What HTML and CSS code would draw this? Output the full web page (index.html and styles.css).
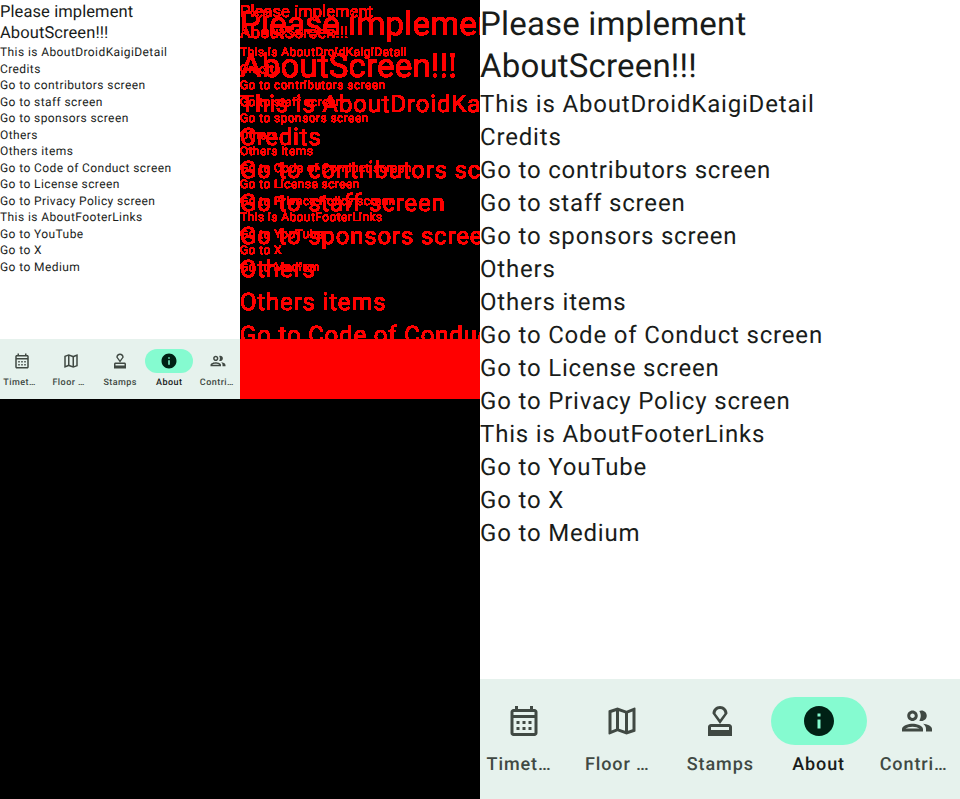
FILE: index.html
```
<!DOCTYPE html>
<html lang="en">
<head>
<meta charset="utf-8">
<title>About screen comparison</title>
<link rel="stylesheet" href="styles.css">
</head>
<body>
<svg class="defs" aria-hidden="true">
  <filter id="changed" x="0" y="0" width="100%" height="100%" color-interpolation-filters="sRGB">
    <feColorMatrix values="60 0 0 0 -1  0 0 0 0 0  0 0 0 0 0  0 0 0 0 1"/>
  </filter>
  <symbol id="calendar" viewBox="0 0 24 24"><path d="M19 4h-1V2h-2v2H8V2H6v2H5C3.89 4 3.01 4.9 3.01 6L3 20c0 1.1.89 2 2 2h14c1.1 0 2-.9 2-2V6c0-1.1-.9-2-2-2zm0 16H5V10h14v10zm0-12H5V6h14v2zM9 14H7v-2h2v2zm4 0h-2v-2h2v2zm4 0h-2v-2h2v2zM9 18H7v-2h2v2zm4 0h-2v-2h2v2zm4 0h-2v-2h2v2z"/></symbol>
  <symbol id="map" viewBox="0 0 24 24"><path d="M20.5 3l-.16.03L15 5.1 9 3 3.36 4.9c-.21.07-.36.25-.36.48V20.5c0 .28.22.5.5.5l.16-.03L9 18.9l6 2.1 5.64-1.9c.21-.07.36-.25.36-.48V3.500c0-.28-.22-.5-.5-.5zM10 5.470l4 1.400v11.660l-4-1.400V5.470zm-5 .990l3-1.010v11.700l-3 1.160V6.460zm14 11.080l-3 1.010V6.860l3-1.160v11.840z"/></symbol>
  <symbol id="stamp" viewBox="0 0 24 24"><path d="M4 16v6h16v-6c0-1.1-.9-2-2-2H6c-1.1 0-2 .9-2 2zm14 2H6v-2h12v2zM12 2C9.24 2 7 4.24 7 7l5 7 5-7c0-2.76-2.24-5-5-5zm0 9L9 7c0-1.66 1.34-3 3-3s3 1.34 3 3l-3 4z"/></symbol>
  <symbol id="info" viewBox="0 0 24 24"><path d="M12 2C6.48 2 2 6.48 2 12s4.48 10 10 10 10-4.480 10-10S17.520 2 12 2zm1 15h-2v-6h2v6zm0-8h-2V7h2v2z"/></symbol>
  <symbol id="people" viewBox="0 0 24 24"><path d="M9 13.75c-2.34 0-7 1.17-7 3.5V19h14v-1.75c0-2.33-4.66-3.5-7-3.5zM4.34 17c.84-.58 2.87-1.25 4.66-1.25s3.82.67 4.66 1.25H4.34zM9 12c1.93 0 3.5-1.57 3.5-3.5S10.93 5 9 5 5.500 6.570 5.500 8.500 7.070 12 9 12zm0-5c.83 0 1.500.67 1.500 1.500S9.830 10 9 10s-1.500-.67-1.500-1.500S8.170 7 9 7zm7.040 6.810c1.160.84 1.960 1.960 1.960 3.440V19h4v-1.750c0-2.020-3.500-3.170-5.960-3.440zM15 12c1.930 0 3.500-1.570 3.500-3.500S16.930 5 15 5c-.54 0-1.040.13-1.500.35.63.89 1 1.980 1 3.150s-.37 2.260-1 3.150c.46.22.96.35 1.500.35z"/></symbol>
</svg>
<main class="comparison">
  <section class="screen screen-small">
    <div class="content">
      <h1>Please implement<br>AboutScreen!!!</h1>
      <p>This is AboutDroidKaigiDetail</p><p>Credits</p><p>Go to contributors screen</p><p>Go to staff screen</p><p>Go to sponsors screen</p><p>Others</p><p>Others items</p><p>Go to Code of Conduct screen</p><p>Go to License screen</p><p>Go to Privacy Policy screen</p><p>This is AboutFooterLinks</p><p>Go to YouTube</p><p>Go to X</p><p>Go to Medium</p>
    </div>
    <nav class="bar">
      <div class="item"><span class="pill"><svg><use href="#calendar"/></svg></span><span class="label cut">Timet…</span></div>
      <div class="item"><span class="pill"><svg><use href="#map"/></svg></span><span class="label cut">Floor …</span></div>
      <div class="item"><span class="pill"><svg><use href="#stamp"/></svg></span><span class="label">Stamps</span></div>
      <div class="item active"><span class="pill"><svg><use href="#info"/></svg></span><span class="label">About</span></div>
      <div class="item"><span class="pill"><svg><use href="#people"/></svg></span><span class="label cut">Contri…</span></div>
    </nav>
  </section>
  <section class="diff">
    <div class="diff-text">
      <div class="content large">
        <h1>Please implement<br>AboutScreen!!!</h1>
        <p>This is AboutDroidKaigiDetail</p><p>Credits</p><p>Go to contributors screen</p><p>Go to staff screen</p><p>Go to sponsors screen</p><p>Others</p><p>Others items</p><p>Go to Code of Conduct screen</p>
      </div>
      <div class="content small">
        <h1>Please implement<br>AboutScreen!!!</h1>
        <p>This is AboutDroidKaigiDetail</p><p>Credits</p><p>Go to contributors screen</p><p>Go to staff screen</p><p>Go to sponsors screen</p><p>Others</p><p>Others items</p><p>Go to Code of Conduct screen</p><p>Go to License screen</p><p>Go to Privacy Policy screen</p><p>This is AboutFooterLinks</p><p>Go to YouTube</p><p>Go to X</p><p>Go to Medium</p>
      </div>
    </div>
    <div class="diff-bar"></div>
  </section>
  <section class="screen screen-large">
    <div class="content">
      <h1>Please implement<br>AboutScreen!!!</h1>
      <p>This is AboutDroidKaigiDetail</p><p>Credits</p><p>Go to contributors screen</p><p>Go to staff screen</p><p>Go to sponsors screen</p><p>Others</p><p>Others items</p><p>Go to Code of Conduct screen</p><p>Go to License screen</p><p>Go to Privacy Policy screen</p><p>This is AboutFooterLinks</p><p>Go to YouTube</p><p>Go to X</p><p>Go to Medium</p>
    </div>
    <nav class="bar">
      <div class="item"><span class="pill"><svg><use href="#calendar"/></svg></span><span class="label cut">Timet…</span></div>
      <div class="item"><span class="pill"><svg><use href="#map"/></svg></span><span class="label cut">Floor …</span></div>
      <div class="item"><span class="pill"><svg><use href="#stamp"/></svg></span><span class="label">Stamps</span></div>
      <div class="item active"><span class="pill"><svg><use href="#info"/></svg></span><span class="label">About</span></div>
      <div class="item"><span class="pill"><svg><use href="#people"/></svg></span><span class="label cut">Contri…</span></div>
    </nav>
  </section>
</main>
</body>
</html>
```
FILE: styles.css
```
* { box-sizing: border-box; }
body { margin: 0; background: #000; font-family: Roboto, sans-serif; }
.defs { display: none; }
.comparison {
  display: grid;
  grid-template-columns: 240px 240px 480px;
  align-items: start;
  height: 799px;
  overflow: hidden;
}
.screen, .large { --u: 1px; }
.screen-small, .small { --u: 0.5px; }
.screen { display: flex; flex-direction: column; background: #fff; color: #191c1a; overflow: hidden; }
.screen-small { height: 399px; }
.screen-large { height: 799px; }
.content {
  flex: 1;
  padding-top: calc(4 * var(--u));
  white-space: nowrap;
  text-rendering: geometricPrecision;
}
.content h1 {
  margin: 0;
  font-size: calc(33 * var(--u));
  line-height: calc(42 * var(--u));
  letter-spacing: calc(0.18 * var(--u));
  font-weight: 400;
}
.content p {
  margin: 0;
  font-size: calc(24 * var(--u));
  line-height: calc(33 * var(--u));
  letter-spacing: calc(0.82 * var(--u));
}
.bar {
  display: flex;
  gap: calc(12 * var(--u));
  height: calc(120 * var(--u));
  padding-left: calc(0.6 * var(--u));
  flex: none;
  background: #e6f2ed;
}
.item {
  flex: 1 1 0;
  min-width: 0;
  display: flex;
  flex-direction: column;
  align-items: center;
  padding: calc(18 * var(--u)) calc(6 * var(--u)) 0;
  color: #404943;
}
.screen-small .item { padding-top: 9.5px; }
.pill {
  flex: none;
  display: flex;
  align-items: center;
  justify-content: center;
  width: calc(96 * var(--u));
  height: calc(48 * var(--u));
  border-radius: calc(24 * var(--u));
}
.pill svg { width: calc(36 * var(--u)); height: calc(36 * var(--u)); fill: currentColor; }
.label {
  margin-top: calc(8 * var(--u));
  font-size: calc(18 * var(--u));
  line-height: calc(24 * var(--u));
  letter-spacing: calc(0.9 * var(--u));
  font-weight: 500;
  white-space: nowrap;
  text-rendering: geometricPrecision;
}
.cut { align-self: flex-start; }
.active .pill { background: #85fbd0; color: #002115; }
.active .label { color: #191c1a; }
.diff { height: 399px; display: flex; flex-direction: column; overflow: hidden; }
.diff-text {
  display: grid;
  height: 339px;
  overflow: hidden;
  isolation: isolate;
  background: #000;
  color: #fff;
  filter: url(#changed);
}
.diff-text .content { grid-area: 1 / 1; min-width: 0; }
.diff-text .small { mix-blend-mode: difference; }
.diff-bar { height: 60px; background: #f00; }
```
